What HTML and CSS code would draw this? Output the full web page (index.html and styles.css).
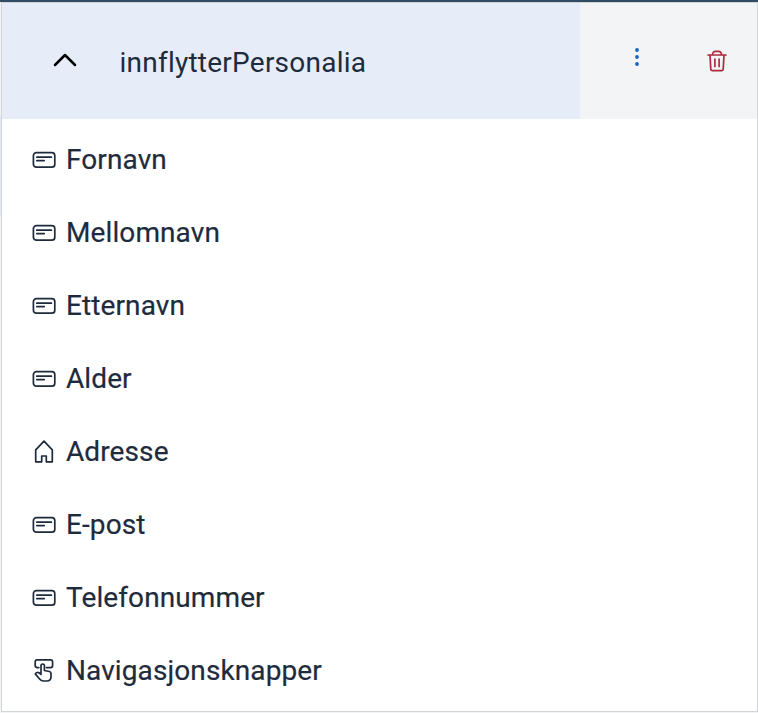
FILE: index.html
```html
<!DOCTYPE html>
<html lang="nb">
<head>
<meta charset="utf-8">
<title>innflytterPersonalia</title>
<link rel="stylesheet" href="styles.css">
</head>
<body>
<svg class="defs" width="0" height="0" aria-hidden="true">
  <symbol id="field" viewBox="0 0 24 24"><rect x="1.4" y="4.7" width="21.4" height="14.5" rx="3"/><path d="M4.8 9.2h14.6M4.8 12.6h7.4"/></symbol>
  <symbol id="home" viewBox="0 0 24 24"><path d="M12 1.2 3.7 9.9V21.8H9.7V16H14.3V21.8H20.3V9.9Z"/></symbol>
  <symbol id="tap" viewBox="0 0 24 24"><path d="M6.8 8.6H5A2 2 0 0 1 3.2 6.6V2.8A2 2 0 0 1 5.2.9H18.6A2 2 0 0 1 20.6 2.8V6.6A2 2 0 0 1 18.6 8.6H14.5M9 15V6.7A1.7 1.7 0 0 1 12.4 6.7V11.5L17.4 12.5A2 2 0 0 1 19 14.5V17.8C19 20.4 17.2 22 14.8 22H11.6C9.8 22 8.6 21.3 7.6 20L3.3 14.9C4.3 13.3 6 13.1 7.3 14L9 15.4Z"/></symbol>
</svg>
<div class="topbar"></div>
<main class="panel">
  <header class="header">
    <button class="toggle">
      <svg class="chevron" viewBox="0 0 24 14"><path d="M2 12 12 2 22 12"/></svg>
      <span>innflytterPersonalia</span>
    </button>
    <div class="actions">
      <svg class="dots" viewBox="0 0 6 20"><circle cx="3" cy="3" r="1.9"/><circle cx="3" cy="10" r="1.9"/><circle cx="3" cy="17" r="1.9"/></svg>
      <svg class="trash" viewBox="0 0 20 22"><path d="M1 5H19M5.5 5C5.5 2.5 6.8 1.3 8.5 1.3H11.5C13.2 1.3 14.5 2.5 14.5 5M3 5 3.8 19.2A1.5 1.5 0 0 0 5.3 20.7H14.7A1.5 1.5 0 0 0 16.2 19.2L17 5M7.9 9V16.5M12.1 9V16.5"/></svg>
    </div>
  </header>
  <ul class="list">
    <li><svg class="icon"><use href="#field"/></svg>Fornavn</li>
    <li><svg class="icon"><use href="#field"/></svg>Mellomnavn</li>
    <li><svg class="icon"><use href="#field"/></svg>Etternavn</li>
    <li><svg class="icon"><use href="#field"/></svg>Alder</li>
    <li><svg class="icon"><use href="#home"/></svg>Adresse</li>
    <li><svg class="icon"><use href="#field"/></svg>E-post</li>
    <li><svg class="icon"><use href="#field"/></svg>Telefonnummer</li>
    <li><svg class="icon"><use href="#tap"/></svg>Navigasjonsknapper</li>
  </ul>
</main>
</body>
</html>
```
FILE: styles.css
```css
* { box-sizing: border-box; }
body {
  margin: 0;
  height: 713px;
  overflow: hidden;
  background: linear-gradient(#f3f4f6 116px, #e0e7f6 116px 216px, #f3f4f6 216px);
  color: #1e2b3c;
  font: 28px/36px Roboto, "Liberation Sans", sans-serif;
  letter-spacing: 0.1px;
  -webkit-text-stroke: 0.2px currentColor;
}
.defs { display: none; }
.topbar { height: 2px; background: #304b63; }
.panel {
  height: 710px;
  margin-left: 1px;
  border: 1px solid #d2d5d8;
  background: #fff;
}
.header { display: flex; height: 116px; background: #f3f4f6; }
.toggle {
  display: flex;
  align-items: center;
  width: 578px;
  padding: 3px 0 0 51px;
  border: 0;
  background: #e6edf8;
  color: inherit;
  font: inherit;
  letter-spacing: 0.24px;
  -webkit-text-stroke: 0;
}
svg { flex: none; fill: none; stroke: currentColor; stroke-linecap: round; stroke-linejoin: round; }
.chevron { width: 24px; height: 14px; margin: -5px 42.5px 0 0; color: #000; stroke-width: 2.5; }
.actions { display: flex; flex: 1; align-items: center; }
.dots { width: 6px; height: 20px; margin: -8px 0 0 54px; color: #1e62bd; fill: currentColor; stroke: none; }
.trash { width: 20px; height: 22px; margin-left: 67px; color: #b02a3b; stroke-width: 1.7; }
.list { margin: 0; padding: 4px 0 0 30px; list-style: none; }
.list li { display: flex; align-items: center; height: 73px; }
.icon { width: 24px; height: 24px; margin-right: 10px; stroke-width: 1.7; }
```
